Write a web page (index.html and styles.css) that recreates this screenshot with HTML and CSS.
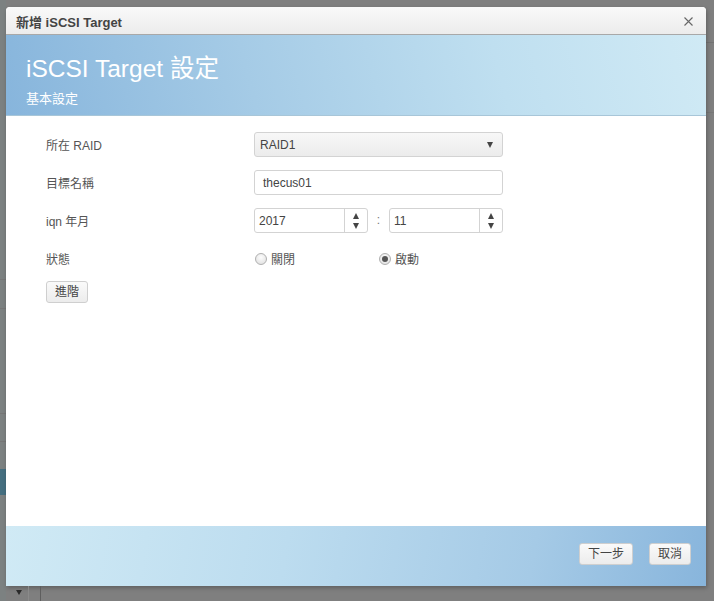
FILE: index.html
```html
<!DOCTYPE html>
<html lang="zh-Hant">
<head>
<meta charset="utf-8">
<title>新增 iSCSI Target</title>
<link rel="stylesheet" href="styles.css">
</head>
<body>
<div class="page">
  <div class="dialog">
    <div class="titlebar">
      <span class="title">新增 iSCSI Target</span>
      <svg class="close" width="9" height="9" viewBox="0 0 9 9"><path d="M0.5 0.5 L8.5 8.5 M8.5 0.5 L0.5 8.5" stroke="#666" stroke-width="1.1" fill="none"/></svg>
    </div>
    <div class="header">
      <div class="h-title">iSCSI Target 設定</div>
      <div class="h-sub">基本設定</div>
    </div>
    <div class="body">
      <div class="form">
        <div class="label">所在 RAID</div>
        <div class="select"><span>RAID1</span><span class="caret"></span></div>

        <div class="label">目標名稱</div>
        <div class="input">thecus01</div>

        <div class="label">iqn 年月</div>
        <div class="spins">
          <div class="spin"><span class="val">2017</span><span class="arrows"><i class="up"></i><i class="down"></i></span></div>
          <span class="colon">:</span>
          <div class="spin"><span class="val">11</span><span class="arrows"><i class="up"></i><i class="down"></i></span></div>
        </div>

        <div class="label">狀態</div>
        <div class="radios">
          <label class="radio"><span class="dot"></span>關閉</label>
          <label class="radio checked"><span class="dot"></span>啟動</label>
        </div>
      </div>
      <button class="btn adv">進階</button>
    </div>
    <div class="footer">
      <button class="btn next">下一步</button>
      <button class="btn cancel">取消</button>
    </div>
  </div>
  <div class="under">
    <span class="tri"></span>
    <span class="vl1"></span>
    <span class="vl2"></span>
  </div>
</div>
</body>
</html>
```
FILE: styles.css
```css
* { box-sizing: border-box; }
html, body { margin: 0; padding: 0; }
body {
  width: 714px;
  height: 601px;
  overflow: hidden;
  background-color: #7f7f7f;
  background-image:
    linear-gradient(#777, #777), linear-gradient(#777, #777),
    linear-gradient(#767676, #767676), linear-gradient(#767676, #767676),
    linear-gradient(#456f80, #456f80),
    linear-gradient(#7c8181, #7c8181),
    linear-gradient(#737373, #737373), linear-gradient(#777, #777);
  background-size:
    6px 1px, 6px 1px, 6px 1px, 6px 1px, 6px 26px, 6px 601px, 8px 1px, 8px 1px;
  background-position:
    0 279px, 0 308px, 0 413px, 0 441px, 0 469px, 0 0, 706px 42px, 706px 112px;
  background-repeat: no-repeat;
  font-family: "Liberation Sans", "Noto Sans CJK TC", sans-serif;
  font-size: 12px;
  color: #555;
}
.page { padding: 7px 0 0 6px; }
.dialog {
  width: 700px;
  height: 579px;
  display: flex;
  flex-direction: column;
  background: #fff;
  border-radius: 4px 4px 0 0;
  box-shadow: 1px 2px 4px rgba(0,0,0,0.25);
}
.titlebar {
  height: 28px;
  flex: none;
  display: flex;
  align-items: center;
  justify-content: space-between;
  padding: 0 13px 0 10px;
  background: linear-gradient(#f9f9f9, #ececec);
  border-bottom: 1px solid #a8a8a8;
  border-radius: 4px 4px 0 0;
}
.title {
  font-weight: bold;
  font-size: 13px;
  color: #444;
  padding-top: 1px;
}
.close { display: block; margin-top: 1px; }
.header {
  height: 81px;
  flex: none;
  padding: 20px 0 0 20px;
  background: linear-gradient(75deg, #87b5dc 0%, #a5cbe6 35%, #bfdff0 70%, #d0eaf5 100%);
  border-bottom: 1px solid #a8c6d8;
  color: #fff;
}
.h-title {
  font-size: 24.5px;
  line-height: 28px;
}
.h-sub {
  font-size: 13px;
  line-height: 16px;
  margin-top: 8px;
}
.body {
  flex: 1;
  padding: 16px 0 0 40px;
}
.form {
  display: grid;
  grid-template-columns: 208px 249px;
  grid-auto-rows: 25px;
  row-gap: 13px;
  align-items: center;
}
.label { color: #555; font-size: 12px; }
.select {
  height: 25px;
  display: flex;
  align-items: center;
  justify-content: space-between;
  padding: 0 9px 0 5px;
  border: 1px solid #d3d3d3;
  border-radius: 3px;
  background: linear-gradient(#f7f7f7, #ececec);
  color: #444;
}
.caret {
  width: 0; height: 0;
  border-left: 3.5px solid transparent;
  border-right: 3.5px solid transparent;
  border-top: 6px solid #444;
}
.input {
  height: 25px;
  display: flex;
  align-items: center;
  padding: 0 8px;
  border: 1px solid #d3d3d3;
  border-radius: 3px;
  color: #444;
}
.spins {
  display: flex;
  align-items: center;
  height: 25px;
}
.spin {
  width: 114px;
  height: 25px;
  display: flex;
  border: 1px solid #d3d3d3;
  border-radius: 3px;
  color: #444;
}
.spin .val {
  flex: 1;
  display: flex;
  align-items: center;
  padding-left: 4px;
}
.arrows {
  width: 23px;
  border-left: 1px solid #d3d3d3;
  display: flex;
  flex-direction: column;
  align-items: center;
  justify-content: center;
  gap: 4px;
}
.arrows i { display: block; width: 0; height: 0; border-left: 3.5px solid transparent; border-right: 3.5px solid transparent; }
.arrows .up { border-bottom: 6px solid #444; }
.arrows .down { border-top: 6px solid #444; }
.colon { width: 21px; text-align: center; color: #777; padding-bottom: 2px; }
.radios { display: flex; align-items: center; }
.radio {
  width: 124px;
  display: flex;
  align-items: center;
  gap: 4px;
  color: #555;
  padding-left: 1px;
}
.dot {
  width: 12px; height: 12px;
  border-radius: 50%;
  border: 1px solid #b0b0b0;
  background: radial-gradient(circle at 50% 35%, #fdfdfd, #dcdcdc);
  display: flex;
  align-items: center;
  justify-content: center;
}
.checked .dot::after {
  content: "";
  width: 6px; height: 6px;
  border-radius: 50%;
  background: #555;
}
.btn {
  font-family: "Liberation Sans", "Noto Sans CJK TC", sans-serif;
  font-size: 12px;
  color: #444;
  height: 22px;
  padding: 0 8px;
  border: 1px solid #cfcfcf;
  border-radius: 3px;
  background: linear-gradient(#fafafa, #ececec);
  line-height: 20px;
}
.adv { margin-top: 10px; width: 42px; padding: 0; }
.footer {
  height: 60px;
  flex: none;
  display: flex;
  justify-content: flex-end;
  align-items: center;
  gap: 16px;
  padding: 0 15px 4px 0;
  background: linear-gradient(100deg, #d0eaf5 0%, #bcdcef 40%, #a5cae6 75%, #88b5dc 100%);
}
.next { width: 54px; padding: 0; }
.cancel { width: 42px; padding: 0; }
.under {
  height: 15px;
  display: flex;
  align-items: flex-start;
  margin-left: -6px;
}
.tri {
  margin: 4px 0 0 16px;
  width: 0; height: 0;
  border-left: 3.5px solid transparent;
  border-right: 3.5px solid transparent;
  border-top: 5px solid #2a2a2a;
}
.vl1 { margin-left: 6px; width: 1px; height: 15px; background: #8a8a8a; }
.vl2 { margin-left: 11px; width: 1px; height: 15px; background: #5e5e5e; }
```
